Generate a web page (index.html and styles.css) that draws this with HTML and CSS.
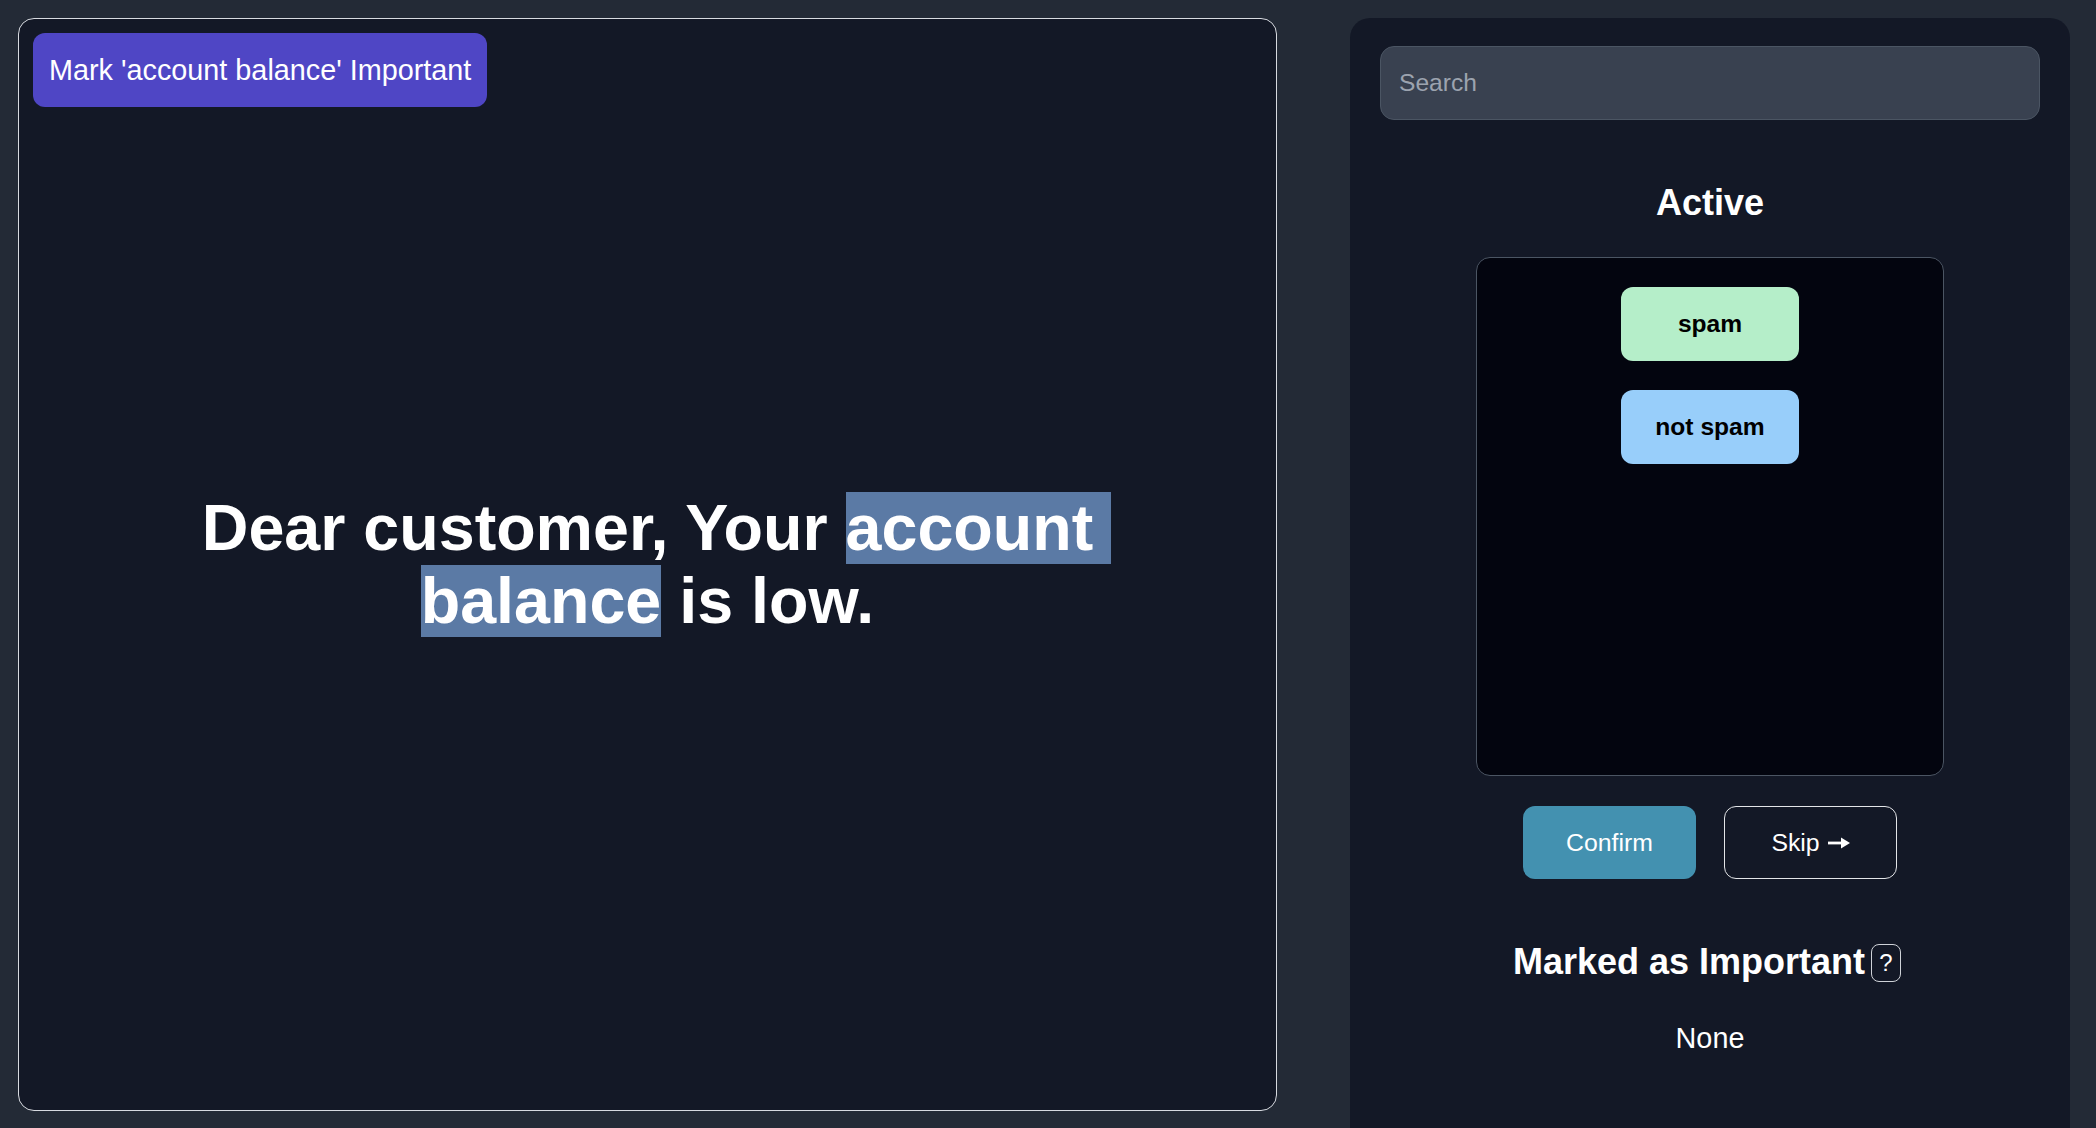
FILE: index.html
```html
<!DOCTYPE html>
<html lang="en">
<head>
<meta charset="utf-8">
<title>Labeler</title>
<link rel="stylesheet" href="styles.css">
</head>
<body>
  <main class="viewer">
    <button class="mark-btn">Mark 'account balance' Important</button>
    <p class="message">Dear customer, Your <span class="hl">account balance</span> is low.</p>
  </main>
  <aside class="sidebar">
    <input class="search" type="text" placeholder="Search">
    <h2 class="heading heading-active">Active</h2>
    <div class="label-box">
      <button class="chip chip-spam">spam</button>
      <button class="chip chip-notspam">not spam</button>
    </div>
    <div class="actions">
      <button class="btn btn-confirm">Confirm</button>
      <button class="btn btn-skip">Skip
        <svg class="arrow" width="22" height="12" viewBox="0 0 22 12"><path d="M0 4.6h14v2.8H0z" fill="#fff"/><path d="M13 0.5L22 6l-9 5.5z" fill="#fff"/></svg>
      </button>
    </div>
    <div class="important-row">
      <h2 class="heading">Marked as Important</h2>
      <span class="help">?</span>
    </div>
    <p class="none">None</p>
  </aside>
</body>
</html>
```

FILE: styles.css
```css
* { box-sizing: border-box; }

html, body {
  margin: 0;
  height: 1128px;
  overflow: hidden;
}

body {
  background: #232a36;
  font-family: "Liberation Sans", Arial, sans-serif;
  color: #ffffff;
  display: flex;
  align-items: flex-start;
  gap: 73px;
  padding: 18px 26px 0 18px;
}

.viewer {
  position: relative;
  width: 1259px;
  height: 1093px;
  flex: none;
  background: #131826;
  border: 1px solid #d7dae0;
  border-radius: 16px;
  display: flex;
  align-items: center;
  justify-content: center;
  padding: 0 60px;
}

.mark-btn {
  position: absolute;
  top: 14px;
  left: 14px;
  height: 74px;
  padding: 0 16px;
  border: none;
  border-radius: 12px;
  background: #4f46c5;
  color: #ffffff;
  font-family: "Liberation Sans", Arial, sans-serif;
  font-size: 28.8px;
}

.message {
  margin: 0;
  text-align: center;
  font-size: 64.6px;
  font-weight: bold;
  line-height: 73px;
}

.hl {
  background: #5b7aa5;
  white-space: pre-wrap;
}

.sidebar {
  width: 720px;
  flex: none;
  min-height: 1130px;
  background: #131826;
  border-radius: 20px 20px 0 0;
  padding: 28px 30px;
  display: flex;
  flex-direction: column;
  align-items: center;
}

.search {
  width: 100%;
  height: 74px;
  background: #394150;
  border: 1px solid #4b5563;
  border-radius: 14px;
  padding: 0 18px;
  font-family: "Liberation Sans", Arial, sans-serif;
  font-size: 24.6px;
  color: #ffffff;
  outline: none;
}

.search::placeholder {
  color: #9ca3af;
}

.heading {
  margin: 0;
  font-size: 36px;
  font-weight: bold;
  line-height: normal;
}

.heading-active {
  margin-top: 62px;
}

.label-box {
  margin-top: 33px;
  width: 468px;
  height: 519px;
  background: #03050f;
  border: 1px solid #4b5563;
  border-radius: 14px;
  padding-top: 29px;
  display: flex;
  flex-direction: column;
  align-items: center;
  gap: 29px;
}

.chip {
  width: 178px;
  height: 74px;
  border: none;
  border-radius: 12px;
  font-family: "Liberation Sans", Arial, sans-serif;
  font-size: 24.6px;
  font-weight: bold;
  color: #000000;
}

.chip-spam { background: #b5eec9; }
.chip-notspam { background: #98cefa; }

.actions {
  margin-top: 30px;
  display: flex;
  gap: 28px;
}

.btn {
  width: 173px;
  height: 73px;
  border-radius: 12px;
  font-family: "Liberation Sans", Arial, sans-serif;
  font-size: 24.8px;
  color: #ffffff;
  display: flex;
  align-items: center;
  justify-content: center;
  gap: 8px;
}

.btn-confirm {
  background: #4391b0;
  border: none;
}

.btn-skip {
  background: transparent;
  border: 1px solid #e3e5e8;
}

.arrow { display: block; margin-top: 1px; }

.important-row {
  margin-top: 62px;
  display: flex;
  align-items: center;
  gap: 6px;
  margin-right: 6px;
}

.help {
  width: 30px;
  height: 38px;
  border: 1px solid #cfd2d8;
  border-radius: 8px;
  display: flex;
  align-items: center;
  justify-content: center;
  font-size: 24px;
  margin-top: 2px;
}

.none {
  margin: 39px 0 0;
  font-size: 28.8px;
  line-height: normal;
}
```
